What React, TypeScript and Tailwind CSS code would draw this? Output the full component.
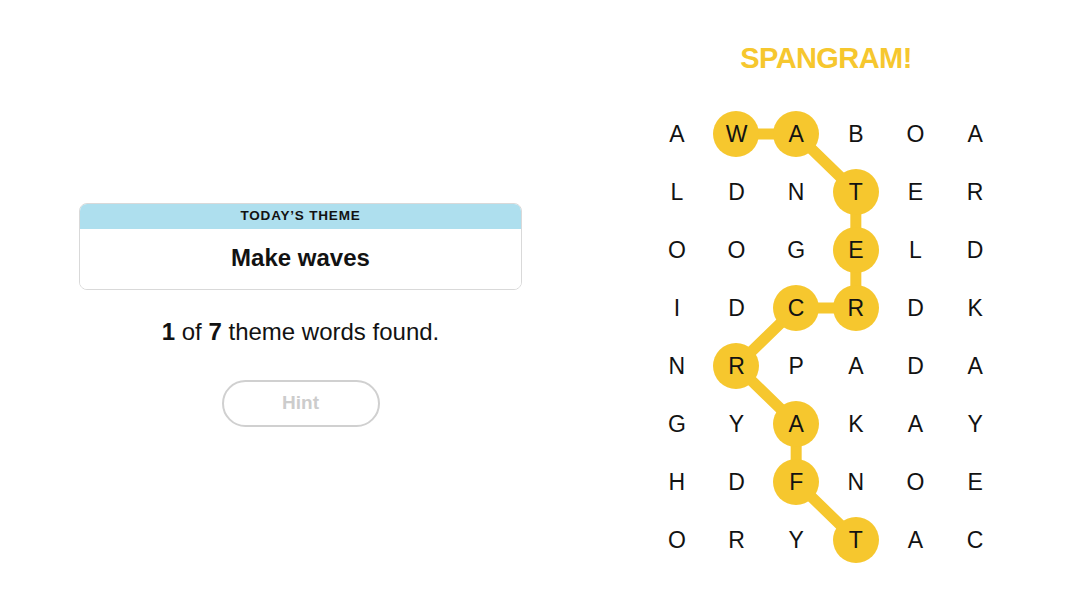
const GRID = [
  "AWABOA",
  "LDNTER",
  "OOGELD",
  "IDCRDK",
  "NRPADA",
  "GYAKAY",
  "HDFNOE",
  "ORYTAC",
];

// spangram path as [col, row]
const PATH: [number, number][] = [
  [1, 0], [2, 0], [3, 1], [3, 2], [3, 3], [2, 3], [1, 4], [2, 5], [2, 6], [3, 7],
];

const CW = 358 / 6;
const RH = 58;

function ThemeCard() {
  return (
    <div className="w-[443px] rounded-[8px] border border-[#d9d9d9] overflow-hidden">
      <div className="h-[25px] bg-[#aedfee] flex items-center justify-center text-[13.5px] font-bold tracking-[0.06em] text-[#121212]">
        TODAY’S THEME
      </div>
      <div className="h-[60px] bg-white flex items-center justify-center text-[24px] font-bold text-[#121212] pb-[2px]">
        Make waves
      </div>
    </div>
  );
}

function Board() {
  const pts = PATH.map(([c, r]) => `${c * CW + CW / 2},${r * RH + RH / 2}`).join(" ");
  const hit = new Set(PATH.map(([c, r]) => `${c}-${r}`));
  return (
    <div className="relative w-[358px] h-[464px]">
      <svg className="absolute inset-0" width={358} height={464}>
        <polyline points={pts} fill="none" stroke="#f6c72e" strokeWidth={11} strokeLinejoin="round" />
      </svg>
      <div className="relative grid grid-cols-6 grid-rows-[repeat(8,58px)]">
        {GRID.map((row, r) =>
          row.split("").map((ch, c) => (
            <div key={`${c}-${r}`} className="flex items-center justify-center">
              <div
                className={
                  "w-[46px] h-[46px] rounded-full flex items-center justify-center text-[23px] text-[#121212] " +
                  (hit.has(`${c}-${r}`) ? "bg-[#f6c72e]" : "")
                }
              >
                {ch}
              </div>
            </div>
          ))
        )}
      </div>
    </div>
  );
}

export default function App() {
  return (
    <div className="w-[1080px] h-[608px] bg-white flex font-['Liberation_Sans',Arial,sans-serif]">
      <div className="pl-[79px] pt-[203px] flex flex-col items-center w-[522px]">
        <ThemeCard />
        <p className="mt-[24px] text-[24px] leading-[36px] text-[#121212]">
          <span className="font-bold">1</span> of <span className="font-bold">7</span> theme words found.
        </p>
        <button className="mt-[30px] w-[158px] h-[47px] rounded-full border-2 border-[#d0d0d0] text-[19px] font-bold text-[#cccccc]">
          Hint
        </button>
      </div>
      <div className="ml-[125px] flex flex-col items-center">
        <h1 className="mt-[40px] h-[36px] text-[29px] leading-[36px] font-bold tracking-[-0.02em] text-[#f6c72e]">
          SPANGRAM!
        </h1>
        <div className="mt-[29px]">
          <Board />
        </div>
      </div>
    </div>
  );
}
